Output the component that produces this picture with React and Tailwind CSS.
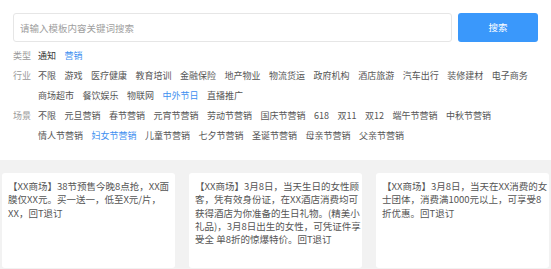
import { useState } from "react";

const filters = [
  { label: "类型", items: ["通知", "营销"], active: "营销" },
  {
    label: "行业",
    items: [
      "不限", "游戏", "医疗健康", "教育培训", "金融保险", "地产物业", "物流货运",
      "政府机构", "酒店旅游", "汽车出行", "装修建材", "电子商务", "商场超市",
      "餐饮娱乐", "物联网", "中外节日", "直播推广",
    ],
    active: "中外节日",
  },
  {
    label: "场景",
    items: [
      "不限", "元旦营销", "春节营销", "元宵节营销", "劳动节营销", "国庆节营销",
      "618", "双11", "双12", "端午节营销", "中秋节营销", "情人节营销", "妇女节营销",
      "儿童节营销", "七夕节营销", "圣诞节营销", "母亲节营销", "父亲节营销",
    ],
    active: "妇女节营销",
  },
];

const templates = [
  [
    "【XX商场】38节预售今晚8点抢，XX面",
    "膜仅XX元。买一送一，低至X元/片，",
    "XX，回T退订",
  ],
  [
    "【XX商场】3月8日，当天生日的女性顾",
    "客，凭有效身份证，在XX酒店消费均可",
    "获得酒店为你准备的生日礼物。(精美小",
    "礼品)，3月8日出生的女性，可凭证件享",
    "受全 单8折的惊爆特价。回T退订",
  ],
  [
    "【XX商场】3月8日，当天在XX消费的女",
    "士团体，消费满1000元以上，可享受8",
    "折优惠。回T退订",
  ],
];

export default function App() {
  const [keyword, setKeyword] = useState("");

  return (
    <div className="w-[551px] h-[269px] overflow-hidden bg-[#f2f2f2] font-['Noto_Sans_CJK_SC','Noto_Sans',sans-serif]">
      {/* search + filters */}
      <div className="bg-white px-[13px] pt-[13px] pb-[14px]">
        <div className="flex gap-[6px]">
          <input
            value={keyword}
            onChange={(e) => setKeyword(e.target.value)}
            placeholder="请输入模板内容关键词搜索"
            className="flex-1 h-[29px] rounded-[3px] border border-[#e6e6e6] px-[6px] text-[9.5px] text-[#333] placeholder:text-[#a0a0a0] outline-none"
          />
          <button className="w-[80px] h-[29px] rounded-[3px] bg-[#3a98fb] text-white text-[9.5px]">
            搜索
          </button>
        </div>

        <div className="mt-[4px] pr-[4px]">
          {filters.map((row, i) => (
            <div key={row.label} className="flex text-[9px]">
              <div className="w-[25px] shrink-0 h-[20px] leading-[20px] text-[#9a9a9a]">
                {row.label}
              </div>
              <div className="flex flex-wrap gap-x-[8.5px]">
                {row.items.map((item) => (
                  <span
                    key={item}
                    className={
                      "h-[20px] leading-[20px] whitespace-nowrap " +
                      (item === row.active
                        ? "text-[#3d8ff0]"
                        : i === 0
                        ? "text-[#333]"
                        : "text-[#555]")
                    }
                  >
                    {item}
                  </span>
                ))}
              </div>
            </div>
          ))}
        </div>
      </div>

      {/* template cards */}
      <div className="grid grid-cols-3 gap-[14px] px-[2px] pt-[13px]">
        {templates.map((lines, i) => (
          <div
            key={i}
            className="h-[95px] rounded-[3px] bg-white px-[6px] pt-[7px] text-[9.5px] leading-[13.3px] text-[#555]"
          >
            {lines.map((line, j) => (
              <div key={j} className="whitespace-nowrap">
                {line}
              </div>
            ))}
          </div>
        ))}
      </div>
    </div>
  );
}
